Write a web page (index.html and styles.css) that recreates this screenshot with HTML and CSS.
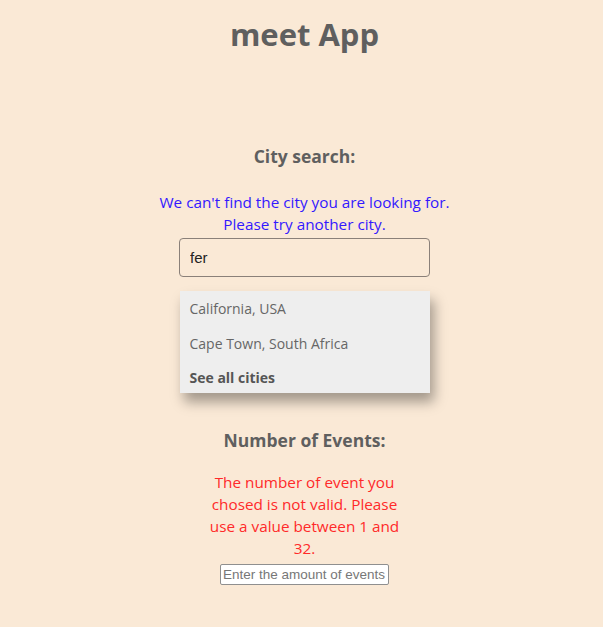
FILE: index.html
```html
<!DOCTYPE html>
<html lang="en">
<head>
<meta charset="utf-8">
<title>meet App</title>
<link rel="stylesheet" href="styles.css">
</head>
<body>
<div class="app">
  <h1 class="title">meet App</h1>
  <section class="city-search">
    <h3 class="label">City search:</h3>
    <p class="info-alert">We can't find the city you are looking for.<br>Please try another city.</p>
    <input class="city-input" type="text" value="fer">
    <ul class="suggestions">
      <li>California, USA</li>
      <li>Cape Town, South Africa</li>
      <li class="all">See all cities</li>
    </ul>
  </section>
  <section class="events">
    <h3 class="label">Number of Events:</h3>
    <p class="error-alert">The number of event you chosed is not valid. Please use a value between 1 and 32.</p>
    <input class="events-input" type="text" placeholder="Enter the amount of events">
  </section>
</div>
</body>
</html>
```

FILE: styles.css
```css
html, body {
  margin: 0;
  padding: 0;
  background: #fae9d6;
}
body {
  font-family: "Open Sans", "Noto Sans", sans-serif;
  color: #5f5f5f;
}
.app {
  display: flex;
  flex-direction: column;
  align-items: center;
  text-align: center;
  padding-left: 6px;
}
.title {
  margin: 12px 0 0;
  font-size: 31px;
  line-height: 44px;
  font-weight: 700;
  color: #5f5f5f;
}
.city-search {
  margin-top: 87px;
  display: flex;
  flex-direction: column;
  align-items: center;
}
.label {
  margin: 0;
  font-size: 17.5px;
  line-height: 26px;
  font-weight: 700;
}
.info-alert {
  margin: 22px 0 3px;
  font-size: 15.3px;
  line-height: 22px;
  color: #3318ff;
}
.city-input {
  box-sizing: border-box;
  width: 251px;
  height: 39px;
  border: 1px solid #8a8079;
  border-radius: 4px;
  background: #fae9d6;
  padding: 0 10px;
  font-family: "Liberation Sans", Arial, sans-serif;
  font-size: 15px;
  color: #222;
  outline: none;
}
.suggestions {
  list-style: none;
  margin: 14px 0 0;
  padding: 0;
  width: 250px;
  background: #eeeeee;
  box-shadow: 4px 9px 12px rgba(0,0,0,0.35);
  text-align: left;
}
.suggestions li {
  padding: 0 10px;
  height: 35px;
  line-height: 35px;
  font-size: 14px;
  color: #666;
}
.suggestions li.all {
  height: 32px;
  line-height: 34px;
  font-weight: 700;
  color: #555;
}
.events {
  margin-top: 34px;
  display: flex;
  flex-direction: column;
  align-items: center;
}
.error-alert {
  margin: 18px 0 5px;
  width: 202px;
  font-size: 15.3px;
  line-height: 22px;
  color: #ff2a2a;
}
.events-input {
  box-sizing: border-box;
  width: 169px;
  height: 21px;
  border: 1px solid #8f8f8f;
  border-radius: 2px;
  background: #fff;
  padding: 0 2px;
  font-family: "Liberation Sans", Arial, sans-serif;
  font-size: 13.5px;
}
.events-input::placeholder {
  color: #777;
}
```
